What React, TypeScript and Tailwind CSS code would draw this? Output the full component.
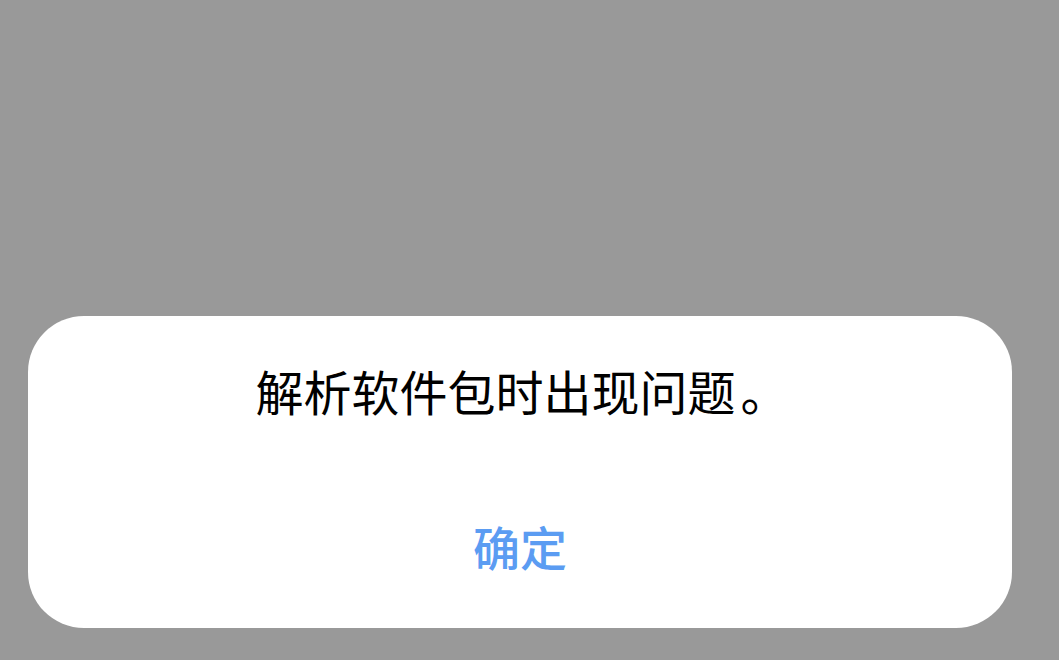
export default function App() {
  return (
    <div
      className="h-[660px] w-full bg-[#999999] flex flex-col justify-end pl-[28px] pb-[32px]"
      style={{ fontFamily: '"Noto Sans CJK SC", "Noto Sans", sans-serif' }}
    >
      {/* Alert dialog */}
      <div className="h-[312px] w-[984px] bg-white rounded-[56px] flex flex-col items-center pt-[46px]">
        <p className="text-[48px] leading-[56px] text-black pl-[4px]">
          解析软件包时出现问题<span className="ml-[5px]">。</span>
        </p>
        <button className="mt-[100px] text-[47px] leading-[56px] font-medium text-[#5b9cf2]">
          确定
        </button>
      </div>
    </div>
  );
}
